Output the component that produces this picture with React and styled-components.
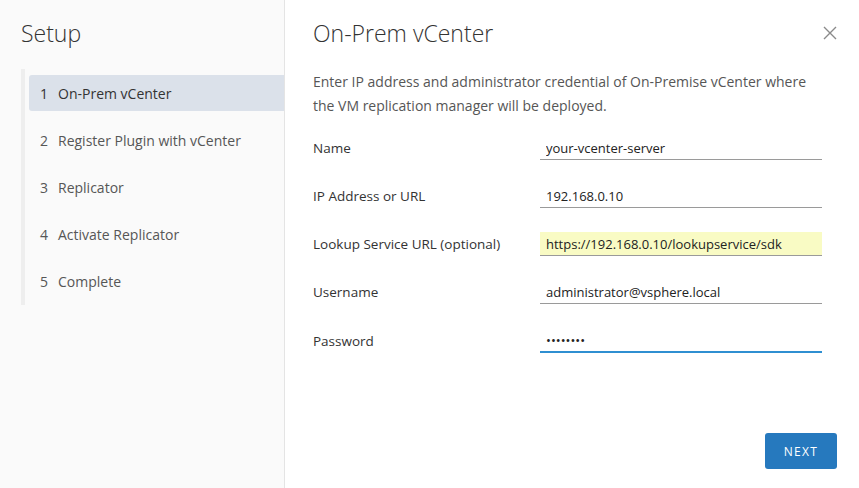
import React from "react";
import styled, { createGlobalStyle } from "styled-components";

const FONT = `"Open Sans", Lato, sans-serif`;

const Global = createGlobalStyle`
  html, body { margin: 0; padding: 0; }
  body { font-family: ${FONT}; background: #fff; }
  * { box-sizing: border-box; }
`;

const Shell = styled.div`
  display: flex;
  width: 859px;
  height: 488px;
  overflow: hidden;
`;

const Sidebar = styled.aside`
  width: 285px;
  flex: none;
  background: #fafafa;
  border-right: 1px solid #e4e4e4;
  padding: 18px 0 0 21px;
  display: flex;
  flex-direction: column;
`;

const PanelTitle = styled.h1`
  margin: 0;
  font-size: 23px;
  line-height: 30px;
  font-weight: 300;
  color: #333;
`;

const StepList = styled.ol`
  list-style: none;
  margin: 21px 0 0;
  padding: 6px 0 6px 4px;
  border-left: 4px solid #eeeeee;
  display: flex;
  flex-direction: column;
  gap: 11px;
`;

const Step = styled.li`
  height: 36px;
  display: flex;
  align-items: center;
  padding-left: 11px;
  font-size: 14px;
  color: ${p => (p.$active ? "#333" : "#565656")};
  background: ${p => (p.$active ? "#dbe1ea" : "transparent")};
  border-radius: 3px 0 0 3px;
`;

const StepNum = styled.span`
  margin-right: 10px;
`;

const Main = styled.main`
  flex: 1;
  display: flex;
  flex-direction: column;
  padding: 18px 22px 19px 28px;
`;

const Header = styled.div`
  display: flex;
  align-items: center;
  justify-content: space-between;
`;

const CloseButton = styled.button`
  border: none;
  background: none;
  padding: 0;
  width: 14px;
  height: 14px;
  display: flex;
  cursor: pointer;
`;

const Description = styled.p`
  margin: 22px 0 0;
  font-size: 14px;
  line-height: 24px;
  color: #565656;
  width: 500px;
`;

const Form = styled.div`
  margin-top: 18px;
  display: grid;
  grid-template-columns: 227px 282px;
  row-gap: 24px;
  align-items: center;
`;

const Label = styled.label`
  font-size: 13.5px;
  color: #333;
`;

const Input = styled.input`
  height: 24px;
  width: 282px;
  border: none;
  border-bottom: ${p => (p.$focused ? "2px solid #2f8fd1" : "1px solid #9a9a9a")};
  background: ${p => (p.$autofill ? "#f9fbc4" : "transparent")};
  padding: 0 6px;
  font-family: ${FONT};
  font-size: 13px;
  color: #222;
  outline: none;
  margin-top: ${p => (p.$focused ? "1px" : "0")};
`;

const Footer = styled.div`
  margin-top: auto;
  display: flex;
  justify-content: flex-end;
`;

const PrimaryButton = styled.button`
  width: 72px;
  height: 36px;
  border: none;
  border-radius: 3px;
  background: #2679be;
  color: #fff;
  font-family: ${FONT};
  font-size: 12px;
  letter-spacing: 1.3px;
  cursor: pointer;
`;

const steps = [
  "On-Prem vCenter",
  "Register Plugin with vCenter",
  "Replicator",
  "Activate Replicator",
  "Complete",
];

const fields = [
  { label: "Name", value: "your-vcenter-server" },
  { label: "IP Address or URL", value: "192.168.0.10" },
  { label: "Lookup Service URL (optional)", value: "https://192.168.0.10/lookupservice/sdk", autofill: true },
  { label: "Username", value: "administrator@vsphere.local" },
  { label: "Password", value: "password", type: "password", focused: true },
];

export default function App() {
  return (
    <>
      <Global />
      <Shell>
        <Sidebar>
          <PanelTitle>Setup</PanelTitle>
          <StepList>
            {steps.map((s, i) => (
              <Step key={s} $active={i === 0}>
                <StepNum>{i + 1}</StepNum>
                {s}
              </Step>
            ))}
          </StepList>
        </Sidebar>
        <Main>
          <Header>
            <PanelTitle>On-Prem vCenter</PanelTitle>
            <CloseButton aria-label="Close">
              <svg width="14" height="14" viewBox="0 0 14 14">
                <path d="M1 1 L13 13 M13 1 L1 13" stroke="#8a8a8a" strokeWidth="1.4" fill="none" />
              </svg>
            </CloseButton>
          </Header>
          <Description>
            Enter IP address and administrator credential of On-Premise vCenter where the VM replication manager will be deployed.
          </Description>
          <Form>
            {fields.map(f => (
              <React.Fragment key={f.label}>
                <Label>{f.label}</Label>
                <Input
                  readOnly
                  type={f.type || "text"}
                  value={f.value}
                  $autofill={f.autofill}
                  $focused={f.focused}
                />
              </React.Fragment>
            ))}
          </Form>
          <Footer>
            <PrimaryButton>NEXT</PrimaryButton>
          </Footer>
        </Main>
      </Shell>
    </>
  );
}
